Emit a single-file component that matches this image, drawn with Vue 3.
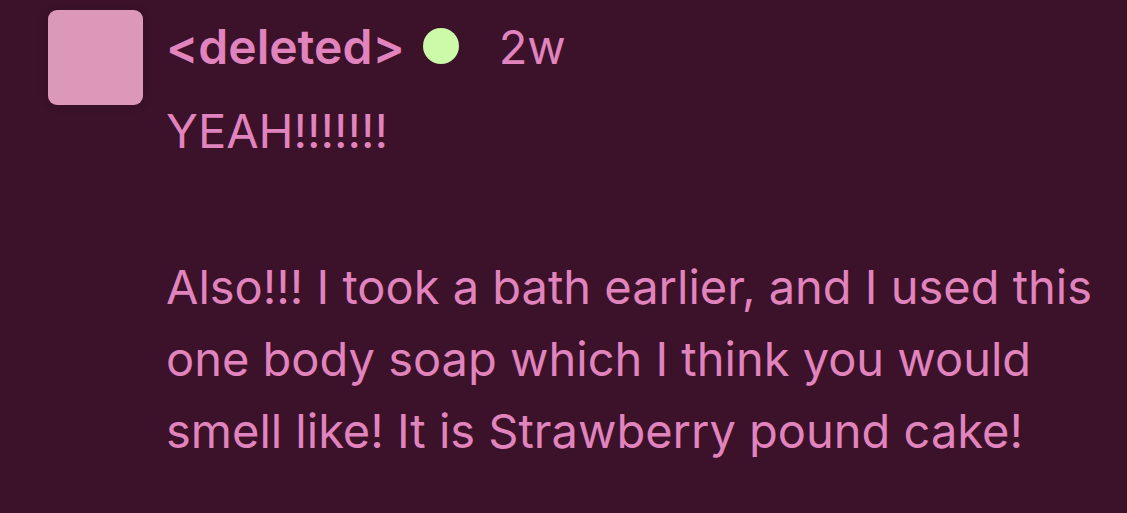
<script setup>
const paragraphs = [
  'YEAH!!!!!!!',
  'Also!!! I took a bath earlier, and I used this one body soap which I think you would smell like! It is Strawberry pound cake!',
]
</script>

<template>
  <article class="comment">
    <div class="avatar" role="img" aria-label="Avatar"></div>
    <div class="content">
      <header class="meta">
        <strong class="author">&lt;deleted&gt;</strong>
        <span class="status" role="img" aria-label="Online"></span>
        <time class="age">2w</time>
      </header>
      <p v-for="text in paragraphs" :key="text">{{ text }}</p>
    </div>
  </article>
</template>

<style>
body {
  background: #3b1229;
}
</style>

<style scoped>
.comment {
  display: flex;
  align-items: flex-start;
  gap: 23px;
  padding: 10px 24px 40px 48px;
  color: #e184bd;
  font-family: Inter, "Liberation Sans", sans-serif;
  font-size: 47px;
  line-height: 72px;
}
.avatar {
  flex: none;
  width: 95px;
  height: 95px;
  border-radius: 9px;
  background: #dc98b9;
  box-shadow: 0 0 12px rgba(0, 0, 0, 0.12);
}
.content {
  flex: 1;
  min-width: 0;
  padding-top: 1px;
}
.meta {
  display: flex;
  align-items: center;
  margin-bottom: 12px;
}
.author {
  font-size: 48px;
  font-weight: 600;
}
.status {
  width: 36px;
  height: 36px;
  margin: 0 40px 2px 18px;
  border-radius: 50%;
  background: #cdfaa8;
}
p {
  margin: 0;
}
p + p {
  margin-top: 84px;
}
</style>
